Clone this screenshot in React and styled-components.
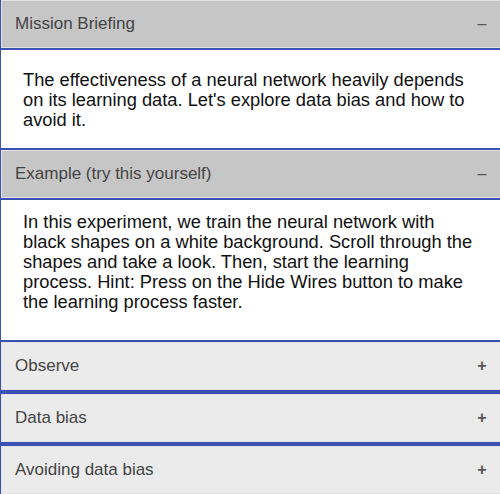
import React, { useState } from 'react';
import styled, { createGlobalStyle } from 'styled-components';

const GlobalStyle = createGlobalStyle`
  html, body {
    margin: 0;
    padding: 0;
    background: #ffffff;
  }
  body {
    font-family: "Liberation Sans", Arial, Helvetica, sans-serif;
  }
`;

const Accordion = styled.div`
  width: 100%;
  border-left: 1px solid #3b52b4;
  box-sizing: border-box;
`;

const Section = styled.div`
  border-bottom: ${props => (props.$closed ? '2px solid #3b52b4' : 'none')};
`;

const Header = styled.button`
  display: flex;
  align-items: center;
  justify-content: space-between;
  width: 100%;
  height: 50px;
  margin: 0;
  padding: 0 13px 0 14px;
  box-sizing: border-box;
  border: none;
  border-bottom: 2px solid #3b52b4;
  box-shadow: inset 1px 1px 0 #e2e2e2, inset 0 -1px 0 #e2e2e2;
  background: ${props => (props.$open ? '#c6c6c6' : '#ebebeb')};
  font-family: inherit;
  font-size: 17px;
  color: #444;
  text-align: left;
  cursor: pointer;
`;

const Sign = styled.span`
  font-size: 16px;
  font-weight: ${props => (props.$plus ? 700 : 400)};
  color: #555;
  width: 10px;
  text-align: center;
`;

const Panel = styled.div`
  padding: ${props => props.$pad};
  padding-left: 22px;
  padding-right: 20px;
  border-bottom: 2px solid #3b52b4;
  background: #fff;
  font-size: 18.3px;
  line-height: 20px;
  color: #111;
`;

const sections = [
  {
    title: 'Mission Briefing',
    pad: '20px 0 18px',
    text: "The effectiveness of a neural network heavily depends on its learning data. Let's explore data bias and how to avoid it.",
  },
  {
    title: 'Example (try this yourself)',
    pad: '12px 0 28px',
    text: 'In this experiment, we train the neural network with black shapes on a white background. Scroll through the shapes and take a look. Then, start the learning process. Hint: Press on the Hide Wires button to make the learning process faster.',
  },
  { title: 'Observe', text: '' },
  { title: 'Data bias', text: '' },
  { title: 'Avoiding data bias', text: '' },
];

const App = () => {
  const [open, setOpen] = useState([0, 1]);

  const toggle = i =>
    setOpen(cur => (cur.includes(i) ? cur.filter(x => x !== i) : [...cur, i]));

  return (
    <>
      <GlobalStyle />
      <Accordion>
        {sections.map((s, i) => {
          const isOpen = open.includes(i);
          return (
            <Section key={s.title} $closed={!isOpen}>
              <Header $open={isOpen} onClick={() => toggle(i)}>
                <span>{s.title}</span>
                <Sign $plus={!isOpen}>{isOpen ? '\u2013' : '+'}</Sign>
              </Header>
              {isOpen && <Panel $pad={s.pad}>{s.text}</Panel>}
            </Section>
          );
        })}
      </Accordion>
    </>
  );
};

export default App;
